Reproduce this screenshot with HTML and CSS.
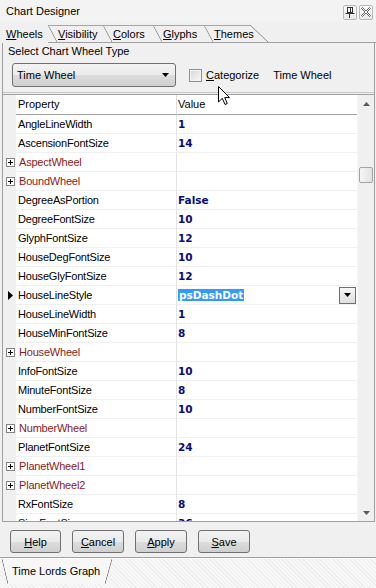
FILE: index.html
```html
<!DOCTYPE html>
<html>
<head>
<meta charset="utf-8">
<title>Chart Designer</title>
<link rel="stylesheet" href="styles.css">
</head>
<body>
<div class="window">
  <div class="titlebar">
    <span class="title">Chart Designer</span>
    <div class="tbtns">
      <span class="tbtn">
        <svg width="10" height="11" viewBox="0 0 10 11"><rect x="2.5" y="0.5" width="5" height="5" fill="none" stroke="#333"/><line x1="5.5" y1="1" x2="5.5" y2="5" stroke="#333"/><line x1="0.5" y1="6.5" x2="9.5" y2="6.5" stroke="#333"/><line x1="4.5" y1="7" x2="4.5" y2="11" stroke="#333"/></svg>
      </span>
      <span class="tbtn">
        <svg width="10" height="10" viewBox="0 0 10 10"><path d="M0.5 1.5 L1.5 0.5 L5 4 L8.5 0.5 L9.5 1.5 L6 5 L9.5 8.5 L8.5 9.5 L5 6 L1.5 9.5 L0.5 8.5 L4 5 Z" fill="#fff" stroke="#555" stroke-width="0.9" stroke-linejoin="round"/></svg>
      </span>
    </div>
  </div>

  <div class="tabs">
    <div class="tab active"><u>W</u>heels</div>
    <div class="tab t-vis"><u>V</u>isibility</div>
    <div class="tab t-col"><u>C</u>olors</div>
    <div class="tab t-gly"><u>G</u>lyphs</div>
    <div class="tab t-the"><u>T</u>hemes</div>
    <div class="tab-end"></div>
    <div class="tab-fill"></div>
  </div>

  <div class="panel">
    <div class="group">
      <div class="group-label">Select Chart Wheel Type</div>
      <div class="group-row">
        <div class="combo">
          <span>Time Wheel</span>
          <svg width="7" height="4" viewBox="0 0 7 4"><path d="M0 0 H7 L3.5 4 Z" fill="#000"/></svg>
        </div>
        <label class="check"><span class="box"></span><span><u>C</u>ategorize</span></label>
        <span class="type">Time Wheel</span>
      </div>
    </div>

    <div class="grid">
      <div class="grid-main">
        <div class="ghead">
          <div class="ind"></div>
          <div class="hprop">Property</div>
          <div class="hval">Value</div>
        </div>
        <div class="gbody">
          <div class="row"><div class="ind"></div><div class="prop">AngleLineWidth</div><div class="val">1</div></div>
          <div class="row"><div class="ind"></div><div class="prop">AscensionFontSize</div><div class="val">14</div></div>
          <div class="row cat"><div class="ind"><span class="plus"></span></div><div class="prop">AspectWheel</div><div class="val"></div></div>
          <div class="row cat"><div class="ind"><span class="plus"></span></div><div class="prop">BoundWheel</div><div class="val"></div></div>
          <div class="row"><div class="ind"></div><div class="prop">DegreeAsPortion</div><div class="val">False</div></div>
          <div class="row"><div class="ind"></div><div class="prop">DegreeFontSize</div><div class="val">10</div></div>
          <div class="row"><div class="ind"></div><div class="prop">GlyphFontSize</div><div class="val">12</div></div>
          <div class="row"><div class="ind"></div><div class="prop">HouseDegFontSize</div><div class="val">10</div></div>
          <div class="row"><div class="ind"></div><div class="prop">HouseGlyFontSize</div><div class="val">12</div></div>
          <div class="row sel"><div class="ind"><svg width="5" height="9" viewBox="0 0 5 9"><path d="M0 0 L5 4.5 L0 9 Z" fill="#000"/></svg></div><div class="prop">HouseLineStyle</div><div class="val"><span class="hl">psDashDot</span><span class="ddbtn"><svg width="7" height="4" viewBox="0 0 7 4"><path d="M0 0 H7 L3.5 4 Z" fill="#000"/></svg></span></div></div>
          <div class="row"><div class="ind"></div><div class="prop">HouseLineWidth</div><div class="val">1</div></div>
          <div class="row"><div class="ind"></div><div class="prop">HouseMinFontSize</div><div class="val">8</div></div>
          <div class="row cat"><div class="ind"><span class="plus"></span></div><div class="prop">HouseWheel</div><div class="val"></div></div>
          <div class="row"><div class="ind"></div><div class="prop">InfoFontSize</div><div class="val">10</div></div>
          <div class="row"><div class="ind"></div><div class="prop">MinuteFontSize</div><div class="val">8</div></div>
          <div class="row"><div class="ind"></div><div class="prop">NumberFontSize</div><div class="val">10</div></div>
          <div class="row cat"><div class="ind"><span class="plus"></span></div><div class="prop">NumberWheel</div><div class="val"></div></div>
          <div class="row"><div class="ind"></div><div class="prop">PlanetFontSize</div><div class="val">24</div></div>
          <div class="row cat"><div class="ind"><span class="plus"></span></div><div class="prop">PlanetWheel1</div><div class="val"></div></div>
          <div class="row cat"><div class="ind"><span class="plus"></span></div><div class="prop">PlanetWheel2</div><div class="val"></div></div>
          <div class="row"><div class="ind"></div><div class="prop">RxFontSize</div><div class="val">8</div></div>
          <div class="row"><div class="ind"></div><div class="prop">SignFontSize</div><div class="val">36</div></div>
        </div>
      </div>
      <div class="vscroll">
        <div class="sbtn"><svg width="7" height="4" viewBox="0 0 7 4"><path d="M0 4 H7 L3.5 0 Z" fill="#5a5a5a"/></svg></div>
        <div class="track"><div class="thumb"></div></div>
        <div class="sbtn"><svg width="7" height="4" viewBox="0 0 7 4"><path d="M0 0 H7 L3.5 4 Z" fill="#5a5a5a"/></svg></div>
      </div>
    </div>
  </div>

  <div class="buttons">
    <button class="btn b-help"><u>H</u>elp</button>
    <button class="btn"><u>C</u>ancel</button>
    <button class="btn"><u>A</u>pply</button>
    <button class="btn"><u>S</u>ave</button>
  </div>

  <div class="bottom">
    <div class="btab">Time Lords Graph</div>
  </div>
</div>

<svg class="cursor" width="13" height="20" viewBox="0 0 13 20"><path d="M0.5 0.5 L0.5 16 L4.3 12.3 L7 18.5 L9.3 17.5 L6.7 11.6 L11.5 11.6 Z" fill="#fff" stroke="#000" stroke-width="1" stroke-linejoin="miter"/></svg>
</body>
</html>
```
FILE: styles.css
```css
* { box-sizing: border-box; }
html, body { margin: 0; padding: 0; }
body {
  width: 376px;
  height: 588px;
  overflow: hidden;
  position: relative;
  background: #f0f0f0;
  font-family: "Liberation Sans", Arial, sans-serif;
  font-size: 11px;
  color: #000;
}
.window { display: flex; flex-direction: column; height: 588px; }

/* title bar */
.titlebar {
  height: 22px;
  display: flex;
  align-items: center;
  justify-content: space-between;
  padding: 0 3px 0 6px;
  background: #f3f3f3;
}
.tbtns { display: flex; gap: 2px; margin-top: 2px; }
.tbtn {
  width: 14px;
  height: 15px;
  border: 1px solid #b8b8b8;
  border-radius: 2px;
  background: linear-gradient(#fcfcfc, #e9e9e9);
  display: flex;
  align-items: center;
  justify-content: center;
}

/* tabs */
.tabs { height: 21px; display: flex; align-items: flex-end; }
.tab {
  height: 18px;
  line-height: 16px;
  padding: 0 8px 0 10px;
  border-top: 1px solid #a5a5a5;
  border-bottom: 1px solid #a0a0a0;
  background-image: linear-gradient(to top right, transparent calc(50% - 0.7px), #8a8a8a 50%, transparent calc(50% + 0.7px));
  background-repeat: no-repeat;
  background-origin: border-box;
  background-size: 9px 17px;
  background-position: 0 0;
  white-space: nowrap;
}
.tab.active {
  width: 48px;
  padding: 0 0 0 6px;
  border-top-color: transparent;
  border-bottom-color: transparent;
  background-image: none;
}
.t-vis { width: 55px; }
.t-col { width: 50px; }
.t-gly { width: 51px; }
.t-the { width: 46px; }
.tab-end {
  width: 18px;
  height: 18px;
  border-bottom: 1px solid #a0a0a0;
  background-image: linear-gradient(to top right, transparent calc(50% - 0.7px), #8a8a8a 50%, transparent calc(50% + 0.7px));
  background-repeat: no-repeat;
  background-size: 18px 17px;
}
.tab-fill { flex: 1; height: 1px; background: #a0a0a0; }

/* panel */
.panel {
  margin: 0 1px 0 2px;
  border-left: 1px solid #a0a0a0;
  border-right: 1px solid #a0a0a0;
  display: flex;
  flex-direction: column;
}
.group {
  height: 50px;
  border-bottom: 1px solid #c8c8c8;
  margin-bottom: 1px;
  padding: 1px 0 0 5px;
}
.group-label { line-height: 14px; }
.group-row {
  display: flex;
  align-items: center;
  margin-top: 5px;
  padding-left: 4px;
}
.combo {
  width: 164px;
  height: 24px;
  border: 1px solid #707070;
  border-radius: 3px;
  background: linear-gradient(#f3f3f3 0%, #ebebeb 50%, #dddddd 51%, #cfcfcf 100%);
  display: flex;
  align-items: center;
  justify-content: space-between;
  padding: 0 6px 0 4px;
}
.check {
  display: flex;
  align-items: center;
  gap: 4px;
  margin-left: 13px;
}
.box {
  width: 13px;
  height: 13px;
  border: 1px solid #8e8f8f;
  background: linear-gradient(135deg, #d4d4d4, #fafafa);
  box-shadow: inset 0 0 0 1px #f4f4f4;
}
.type { margin-left: 14px; }

/* property grid */
.grid {
  height: 428px;
  border-top: 1px solid #a0a0a0;
  border-bottom: 1px solid #a0a0a0;
  display: flex;
}
.grid-main { flex: 1; display: flex; flex-direction: column; min-width: 0; }
.ghead {
  height: 20px;
  display: flex;
  background: #fff;
}
.ind {
  width: 13px;
  flex: none;
  background: #f0f0f0;
  display: flex;
  align-items: center;
}
.hprop, .hval {
  line-height: 19px;
  border-bottom: 1px solid #a0a0a0;
}
.hprop { width: 161px; padding-left: 2px; border-right: 1px solid #dcdcdc; }
.hval { flex: 1; padding-left: 1px; }
.gbody { height: 406px; overflow: hidden; }
.row { height: 19px; display: flex; }
.prop, .val {
  background: #fff;
  border-bottom: 1px solid #efefef;
  line-height: 18px;
  white-space: nowrap;
}
.prop { width: 161px; padding-left: 2px; border-right: 1px solid #e4e4e4; letter-spacing: -0.2px; }
.val {
  flex: 1;
  padding-left: 1px;
  font-family: "DejaVu Sans", Verdana, sans-serif;
  font-weight: bold;
  font-size: 10.5px;
  color: #0a0a7a;
}
.cat .prop { color: #8c1a1a; padding-left: 3px; }
.plus {
  width: 9px;
  height: 9px;
  margin-left: 3px;
  border: 1px solid #848484;
  background:
    linear-gradient(#000, #000) center / 5px 1px no-repeat,
    linear-gradient(#000, #000) center / 1px 5px no-repeat,
    #fff;
}
.sel .ind { justify-content: flex-start; padding-left: 5px; }
.sel .val {
  display: flex;
  align-items: center;
  justify-content: space-between;
  padding-right: 1px;
}
.hl {
  background: #3399ff;
  color: #fff;
  line-height: 12px;
  padding: 0 1px;
}
.ddbtn {
  width: 17px;
  height: 17px;
  border: 1px solid #6f6f6f;
  background: linear-gradient(#f7f7f7, #dedede);
  display: flex;
  align-items: center;
  justify-content: center;
}

/* scrollbar */
.vscroll {
  width: 17px;
  flex: none;
  display: flex;
  flex-direction: column;
  background: #f0f0f0;
  border-left: 1px solid #f7f7f7;
}
.sbtn {
  height: 17px;
  display: flex;
  align-items: center;
  justify-content: center;
}
.track { flex: 1; }
.thumb {
  margin: 55px 1px 0 1px;
  height: 16px;
  border: 1px solid #a3a3a3;
  border-radius: 2px;
  background: linear-gradient(90deg, #f6f6f6, #e2e2e2);
}

/* buttons */
.buttons {
  height: 36px;
  display: flex;
  gap: 11px;
  padding: 8px 0 0 10px;
  border-bottom: 1px solid #a0a0a0;
}
.btn {
  width: 52px;
  height: 23px;
  border: 1px solid #707070;
  border-radius: 3px;
  background: linear-gradient(#f2f2f2 0%, #ebebeb 50%, #dddddd 51%, #cfcfcf 100%);
  font-family: "Liberation Sans", Arial, sans-serif;
  font-size: 11px;
  color: #000;
  padding: 0;
}
.b-help { width: 51px; }

/* bottom tab strip */
.bottom {
  flex: 1;
  border-top: 1px solid #fff;
  background: repeating-linear-gradient(45deg, #ededed 0 1px, #f8f8f8 1px 3px);
  padding-left: 2px;
}
.btab {
  width: 110px;
  height: 25px;
  padding: 0 0 0 10px;
  line-height: 24px;
  background:
    linear-gradient(to top right, transparent calc(50% - 0.7px), #7a7a7a 50%, #f7f7f7 calc(50% + 0.7px)) left top / 6px 25px no-repeat,
    linear-gradient(to bottom right, #f7f7f7 calc(50% - 0.7px), #7a7a7a 50%, transparent calc(50% + 0.7px)) right top / 7px 25px no-repeat,
    linear-gradient(#f7f7f7, #f7f7f7) center / 98px 25px no-repeat;
}

/* mouse pointer overlay */
.cursor { position: absolute; left: 218px; top: 86px; }
```
